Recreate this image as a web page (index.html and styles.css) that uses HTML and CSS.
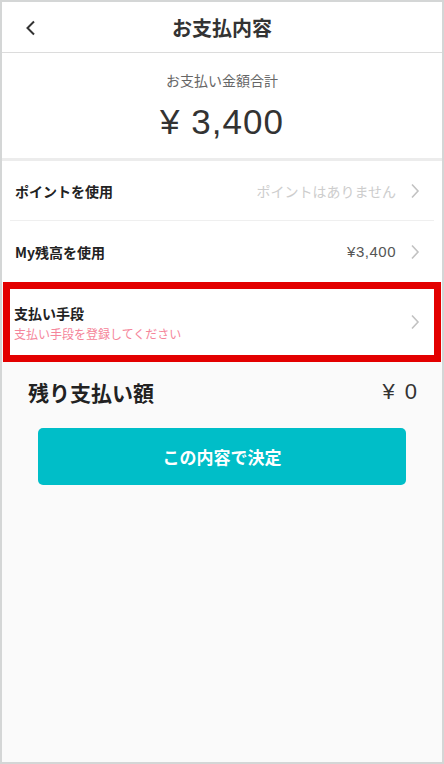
FILE: index.html
```html
<!DOCTYPE html>
<html lang="ja">
<head>
    <meta charset="UTF-8">
    <meta name="viewport" content="width=device-width, initial-scale=1.0">
    <title>お支払内容</title>
    <link rel="stylesheet" href="styles.css">
</head>
<body>
    <div class="screen">
        <header class="header">
            <a class="back" href="#">
                <svg width="12" height="16" viewBox="0 0 12 16"><path d="M9 1.5 L2.5 8 L9 14.5" fill="none" stroke="#333" stroke-width="2"/></svg>
            </a>
            <h1>お支払内容</h1>
            <span></span>
        </header>

        <section class="summary">
            <p class="summary-label">お支払い金額合計</p>
            <p class="summary-amount">¥ 3,400</p>
        </section>

        <div class="row-list">
            <a class="row" href="#">
                <span class="row-title">ポイントを使用</span>
                <span class="row-value muted">ポイントはありません
                    <svg class="chevron" width="10" height="16" viewBox="0 0 10 16"><path d="M2 1.5 L8 8 L2 14.5" fill="none" stroke="#c2c2c2" stroke-width="1.6"/></svg>
                </span>
            </a>
            <a class="row" href="#">
                <span class="row-title">My残高を使用</span>
                <span class="row-value"><span class="num">¥3,400</span>
                    <svg class="chevron" width="10" height="16" viewBox="0 0 10 16"><path d="M2 1.5 L8 8 L2 14.5" fill="none" stroke="#c2c2c2" stroke-width="1.6"/></svg>
                </span>
            </a>
        </div>

        <a class="row row-method" href="#">
            <span class="method-text">
                <span class="row-title">支払い手段</span>
                <span class="method-note">支払い手段を登録してください</span>
            </span>
            <svg class="chevron" width="10" height="16" viewBox="0 0 10 16"><path d="M2 1.5 L8 8 L2 14.5" fill="none" stroke="#c2c2c2" stroke-width="1.6"/></svg>
        </a>

        <div class="remaining">
            <span class="remaining-label">残り支払い額</span>
            <span class="remaining-amount">¥ 0</span>
        </div>

        <button class="submit" type="button">この内容で決定</button>
    </div>
</body>
</html>
```

FILE: styles.css
```css
/* Base */
body {
    margin: 0;
    padding: 0;
    background-color: #fafafa;
    font-family: "Noto Sans CJK JP", "Noto Sans", sans-serif;
    color: #333;
}

.screen {
    height: 764px;
    box-sizing: border-box;
    border: 2px solid #d4d6d6;
    background-color: #fafafa;
}

/* Header */
.header {
    display: grid;
    grid-template-columns: 60px 1fr 60px;
    align-items: center;
    height: 50px;
    background-color: #fff;
    border-bottom: 1px solid #dcdcdc;
}

.back {
    display: flex;
    padding-left: 23px;
    padding-top: 2px;
}

.header h1 {
    margin: 0;
    text-align: center;
    font-size: 20px;
    font-weight: 700;
    color: #333;
}

/* Summary */
.summary {
    height: 108px;
    box-sizing: border-box;
    padding-top: 17px;
    background-color: #fff;
    border-bottom: 3px solid #ececec;
    text-align: center;
}

.summary-label {
    margin: 0;
    font-size: 14px;
    line-height: 20px;
    color: #666;
}

.summary-amount {
    margin: 8px 0 0;
    font-family: "Liberation Sans", Arial, sans-serif;
    font-size: 35px;
    letter-spacing: 1px;
    line-height: 48px;
    color: #333;
}

/* Rows */
.row-list {
    background-color: #fff;
}

.row {
    display: flex;
    align-items: center;
    justify-content: space-between;
    margin: 0 8px;
    padding: 0 14px 0 5px;
    height: 60px;
    color: #333;
    text-decoration: none;
}

.row-list .row:first-child {
    height: 59px;
    border-bottom: 1px solid #efefef;
}

.row-list .row:last-child {
    height: 61px;
}

.row-title {
    font-size: 14px;
    font-weight: 700;
    line-height: 20px;
    color: #222;
}

.row-value {
    display: flex;
    align-items: center;
    gap: 14px;
    font-size: 14px;
    color: #555;
}

.row-value .num {
    font-family: "Liberation Sans", Arial, sans-serif;
    font-size: 15px;
    letter-spacing: 0.5px;
}

.row-value.muted {
    color: #cdcdcd;
}

.chevron {
    display: block;
}

/* Highlighted payment method row */
.row-method {
    margin: 0 1px;
    height: 80px;
    box-sizing: border-box;
    padding: 0 14px 0 4px;
    border: 7px solid #e30000;
    background-color: #fff;
}

.method-text {
    display: flex;
    flex-direction: column;
    gap: 3px;
    padding-top: 1px;
}

.method-note {
    font-size: 12px;
    line-height: 16px;
    color: #f5859a;
}

/* Remaining */
.remaining {
    display: flex;
    justify-content: space-between;
    align-items: center;
    margin-top: 15px;
    padding: 0 25px 0 26px;
    line-height: 30px;
}

.remaining-label {
    font-size: 21px;
    font-weight: 700;
    color: #222;
}

.remaining-amount {
    font-family: "Liberation Sans", Arial, sans-serif;
    font-size: 22px;
    letter-spacing: 2px;
    margin-right: -2px;
    color: #333;
}

.submit {
    display: block;
    width: calc(100% - 72px);
    height: 57px;
    margin: 21px 36px 0;
    border: none;
    border-radius: 5px;
    background-color: #00bec8;
    color: #fff;
    font-family: inherit;
    font-size: 17px;
    font-weight: 700;
    cursor: pointer;
}
```
